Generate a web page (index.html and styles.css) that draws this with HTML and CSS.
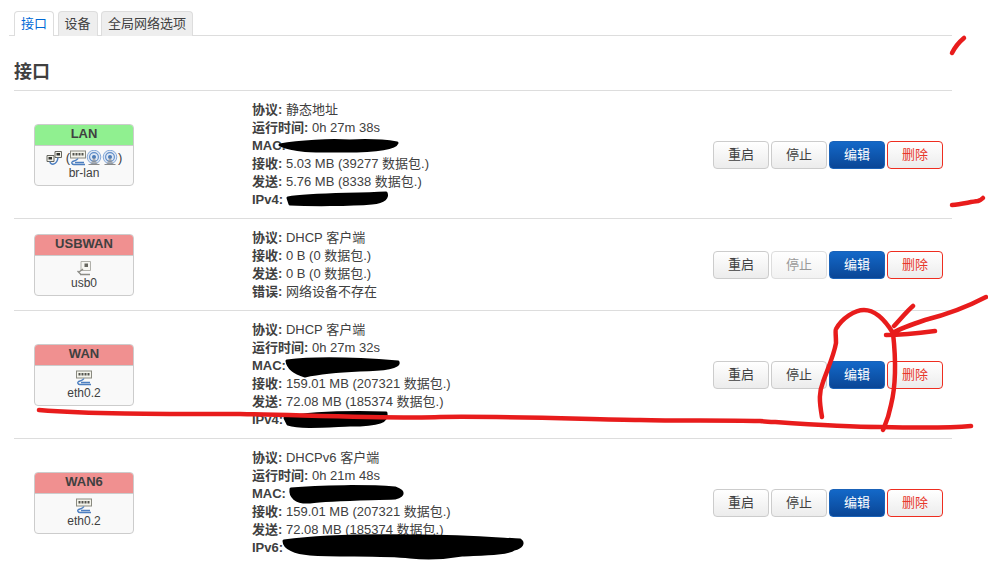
FILE: index.html
```html
<!DOCTYPE html>
<html lang="zh-CN">
<head>
  <meta charset="UTF-8" />
  <meta name="viewport" content="width=device-width, initial-scale=1.0" />
  <title>接口</title>
  <link rel="stylesheet" href="styles.css">
</head>
<body>
  <svg class="icon-defs" width="0" height="0">
    <symbol id="icon-eth" viewBox="0 0 16 16">
      <rect x="0.5" y="1" width="15" height="7" fill="#f4f4ec" stroke="#8a8a80" stroke-width="1"/>
      <path d="M2.5 3h2v2.5h-2zM5.5 3h2v2.5h-2zM8.5 3h2v2.5h-2zM11.5 3h2v2.5h-2z" fill="#55554e"/>
      <path d="M8 8.5C7 10.5 4 11 2.5 11.5 1 12.5 2 14.5 4 14.5H15M5 12.5h9" fill="none" stroke="#4d7fc0" stroke-width="1.4"/>
    </symbol>
    <symbol id="icon-wifi" viewBox="0 0 16 16">
      <circle cx="8" cy="7" r="6.8" fill="#dfe8f4" stroke="#86a9d8" stroke-width="1"/>
      <circle cx="8" cy="7" r="4.4" fill="#dfe8f4" stroke="#5f8cc8" stroke-width="1.1"/>
      <circle cx="8" cy="7" r="2" fill="#4a7ab8"/>
      <path d="M8 7L4.5 14h7z" fill="#8f8f8f" opacity="0.65"/>
      <path d="M2.5 14.5h11" stroke="#8a8a8a" stroke-width="1.2"/>
    </symbol>
    <symbol id="icon-bridge" viewBox="0 0 16 16">
      <path d="M1 5.5h7v6H1zM9 1.5h6.5v6H9z" fill="#f2f2ea" stroke="#66665f"/>
      <path d="M2.5 7h3.5v2.5H2.5zM10.5 3h3.5v2.5h-3.5z" fill="#33332e"/>
      <path d="M4 11.5c0 4 7 4 8-4" fill="none" stroke="#4d7fc0" stroke-width="1.5"/>
    </symbol>
    <symbol id="icon-usb" viewBox="0 0 16 16">
      <path d="M5 1.5h9.5v9H5z" fill="#f6f6f2" stroke="#b0b0aa"/>
      <rect x="8.5" y="3.5" width="3.5" height="3.5" fill="#66665f"/>
      <path d="M7 9L3 12M1.5 11l3 3M4 14.5h10" fill="none" stroke="#8c8c86" stroke-width="1.4"/>
    </symbol>
  </svg>

  <div class="page">
    <ul class="tabs">
      <li class="tab active">接口</li>
      <li class="tab">设备</li>
      <li class="tab">全局网络选项</li>
    </ul>

    <h2 class="section-title">接口</h2>

    <div class="iface-list">
      <div class="iface-row">
        <div class="badge-cell">
          <div class="badge">
            <div class="badge-name lan">LAN</div>
            <div class="badge-body">
              <div class="badge-icons">
                <svg class="icon"><use href="#icon-bridge"/></svg>
                <span class="paren first">(</span>
                <svg class="icon"><use href="#icon-eth"/></svg>
                <svg class="icon"><use href="#icon-wifi"/></svg>
                <svg class="icon"><use href="#icon-wifi"/></svg>
                <span class="paren">)</span>
              </div>
              <div class="badge-dev">br-lan</div>
            </div>
          </div>
        </div>
        <div class="iface-info">
          <div><b>协议:</b> 静态地址</div>
          <div><b>运行时间:</b> 0h 27m 38s</div>
          <div><b>MAC:</b></div>
          <div><b>接收:</b> 5.03 MB (39277 数据包.)</div>
          <div><b>发送:</b> 5.76 MB (8338 数据包.)</div>
          <div><b>IPv4:</b></div>
        </div>
        <div class="iface-actions">
          <button class="btn">重启</button>
          <button class="btn">停止</button>
          <button class="btn edit">编辑</button>
          <button class="btn remove">删除</button>
        </div>
      </div>

      <div class="iface-row">
        <div class="badge-cell">
          <div class="badge">
            <div class="badge-name wan">USBWAN</div>
            <div class="badge-body">
              <div class="badge-icons"><svg class="icon"><use href="#icon-usb"/></svg></div>
              <div class="badge-dev">usb0</div>
            </div>
          </div>
        </div>
        <div class="iface-info">
          <div><b>协议:</b> DHCP 客户端</div>
          <div><b>接收:</b> 0 B (0 数据包.)</div>
          <div><b>发送:</b> 0 B (0 数据包.)</div>
          <div><b>错误:</b> 网络设备不存在</div>
        </div>
        <div class="iface-actions">
          <button class="btn">重启</button>
          <button class="btn" disabled>停止</button>
          <button class="btn edit">编辑</button>
          <button class="btn remove">删除</button>
        </div>
      </div>

      <div class="iface-row">
        <div class="badge-cell">
          <div class="badge">
            <div class="badge-name wan">WAN</div>
            <div class="badge-body">
              <div class="badge-icons"><svg class="icon"><use href="#icon-eth"/></svg></div>
              <div class="badge-dev">eth0.2</div>
            </div>
          </div>
        </div>
        <div class="iface-info">
          <div><b>协议:</b> DHCP 客户端</div>
          <div><b>运行时间:</b> 0h 27m 32s</div>
          <div><b>MAC:</b></div>
          <div><b>接收:</b> 159.01 MB (207321 数据包.)</div>
          <div><b>发送:</b> 72.08 MB (185374 数据包.)</div>
          <div><b>IPv4:</b></div>
        </div>
        <div class="iface-actions">
          <button class="btn">重启</button>
          <button class="btn">停止</button>
          <button class="btn edit">编辑</button>
          <button class="btn remove">删除</button>
        </div>
      </div>

      <div class="iface-row">
        <div class="badge-cell">
          <div class="badge">
            <div class="badge-name wan">WAN6</div>
            <div class="badge-body">
              <div class="badge-icons"><svg class="icon"><use href="#icon-eth"/></svg></div>
              <div class="badge-dev">eth0.2</div>
            </div>
          </div>
        </div>
        <div class="iface-info">
          <div><b>协议:</b> DHCPv6 客户端</div>
          <div><b>运行时间:</b> 0h 21m 48s</div>
          <div><b>MAC:</b></div>
          <div><b>接收:</b> 159.01 MB (207321 数据包.)</div>
          <div><b>发送:</b> 72.08 MB (185374 数据包.)</div>
          <div><b>IPv6:</b></div>
        </div>
        <div class="iface-actions">
          <button class="btn">重启</button>
          <button class="btn">停止</button>
          <button class="btn edit">编辑</button>
          <button class="btn remove">删除</button>
        </div>
      </div>
    </div>
  </div>

  <!-- hand drawn marks on top of the page -->
  <svg class="scribbles" width="988" height="575" viewBox="0 0 988 575">
    <g class="ink-black">
      <path d="M280 145C300 141 330 140 350 141 370 140 385 141 397 143 395 149 370 151 345 151 320 151 295 152 280 145Z"/>
      <path d="M288 198C310 194 350 195 386 193 388 197 385 202 372 203 350 205 310 205 290 204Z"/>
      <path d="M287 361C310 358 350 358 398 362 400 367 385 370 360 370 335 371 318 373 305 376 295 373 288 368 287 361Z"/>
      <path d="M285 418C310 413 350 412 386 413 388 421 380 425 350 425 325 426 300 428 288 424Z"/>
      <path d="M291 489C320 486 370 486 395 488 404 491 405 495 395 498 370 499 330 499 310 502 295 503 290 496 291 489Z"/>
      <path d="M284 541C320 536 370 535 420 536 460 536 500 539 520 540 524 543 522 547 514 549 508 554 480 554 462 555 445 558 430 559 410 557 380 554 340 556 310 554 295 553 284 548 284 541Z"/>
    </g>
    <g class="ink-red">
      <path d="M39 410C90 414 150 414 240 414 300 415 400 419 440 417 500 416 580 419 640 420 680 421 720 420 760 421 790 423 840 427 880 427 920 428 950 428 971 426"/>
      <path d="M822 417C819 400 819 392 823 382 828 368 834 355 836 343 836 335 835 330 836 329 842 318 855 310 864 310 875 310 885 320 893 333 896 360 896 385 891 405 888 420 885 425 883 430"/>
      <path d="M986 297C965 308 945 315 925 320 910 325 898 330 893 333M913 306C906 312 900 320 894 326M935 331C920 333 905 335 886 335"/>
      <path d="M952 53C955 47 958 43 964 38"/>
      <path d="M952 205C962 204 970 202 978 201 981 200 982 199 983 198"/>
    </g>
  </svg>
</body>
</html>
```

FILE: styles.css
```css
* {
  margin: 0;
  padding: 0;
  box-sizing: border-box;
}
body {
  position: relative;
  width: 988px;
  height: 575px;
  overflow: hidden;
  background-color: #fff;
  font-family: 'Liberation Sans', 'Noto Sans CJK SC', sans-serif;
  font-size: 13px;
  line-height: 18px;
  color: #404040;
}
.icon-defs {
  position: absolute;
}
.page {
  width: 952px;
  padding: 11px 0 0 14px;
}
.tabs {
  display: flex;
  gap: 3.5px;
  list-style: none;
  height: 25px;
  margin-left: -5px;
  padding-left: 5px;
  border-bottom: 1px solid #ddd;
}
.tab {
  height: 25px;
  padding: 3px 6px 0;
  background-color: #eee;
  border: 1px solid #ddd;
  border-bottom: none;
  border-radius: 4px 4px 0 0;
  color: #404040;
}
.tab.active {
  background-color: #fff;
  color: #0069d6;
}
.section-title {
  margin-top: 24px;
  height: 30px;
  font-size: 18px;
  line-height: 24px;
  font-weight: bold;
}
.iface-row {
  display: grid;
  grid-template-columns: 238px 1fr auto;
  align-items: center;
  padding: 10px 9px 9px 0;
  border-top: 1px solid #ddd;
}
.badge-cell {
  padding-left: 20px;
}
.badge {
  width: 100px;
  height: 62px;
  border: 1px solid #ccc;
  border-radius: 4px;
  background-color: #f9f9f9;
  overflow: hidden;
  text-align: center;
}
.badge-name {
  height: 21px;
  line-height: 18px;
  font-weight: bold;
  border-bottom: 1px solid #ccc;
}
.badge-name.lan {
  background-color: #90f090;
}
.badge-name.wan {
  background-color: #f09090;
}
.badge-body {
  padding-top: 4px;
}
.badge-icons {
  display: flex;
  justify-content: center;
  align-items: center;
  height: 16px;
}
.paren {
  color: #404040;
}
.paren.first {
  margin-left: 4px;
}
.icon {
  display: block;
  width: 16px;
  height: 16px;
}
.badge-dev {
  font-size: 12px;
  line-height: 15px;
}
.iface-actions {
  display: flex;
  gap: 2px;
}
.btn {
  width: 56px;
  height: 28px;
  border: 1px solid #ccc;
  border-radius: 4px;
  background: linear-gradient(#fff, #ececec);
  font: inherit;
  color: #404040;
}
.btn:disabled {
  color: #999;
  border-color: #ddd;
  background: linear-gradient(#fff, #f2f2f2);
}
.btn.edit {
  background: linear-gradient(#1368c8, #0a4696);
  border-color: #1a62b8;
  color: #fff;
}
.btn.remove {
  border-color: #ee2d20;
  color: #e8372c;
}
.scribbles {
  position: absolute;
  top: 0;
  left: 0;
}
.ink-black path {
  fill: #000;
  stroke: #000;
  stroke-width: 3;
  stroke-linejoin: round;
}
.ink-red path {
  fill: none;
  stroke: #e81c1c;
  stroke-width: 4.5;
  stroke-linecap: round;
  stroke-linejoin: round;
}
```
